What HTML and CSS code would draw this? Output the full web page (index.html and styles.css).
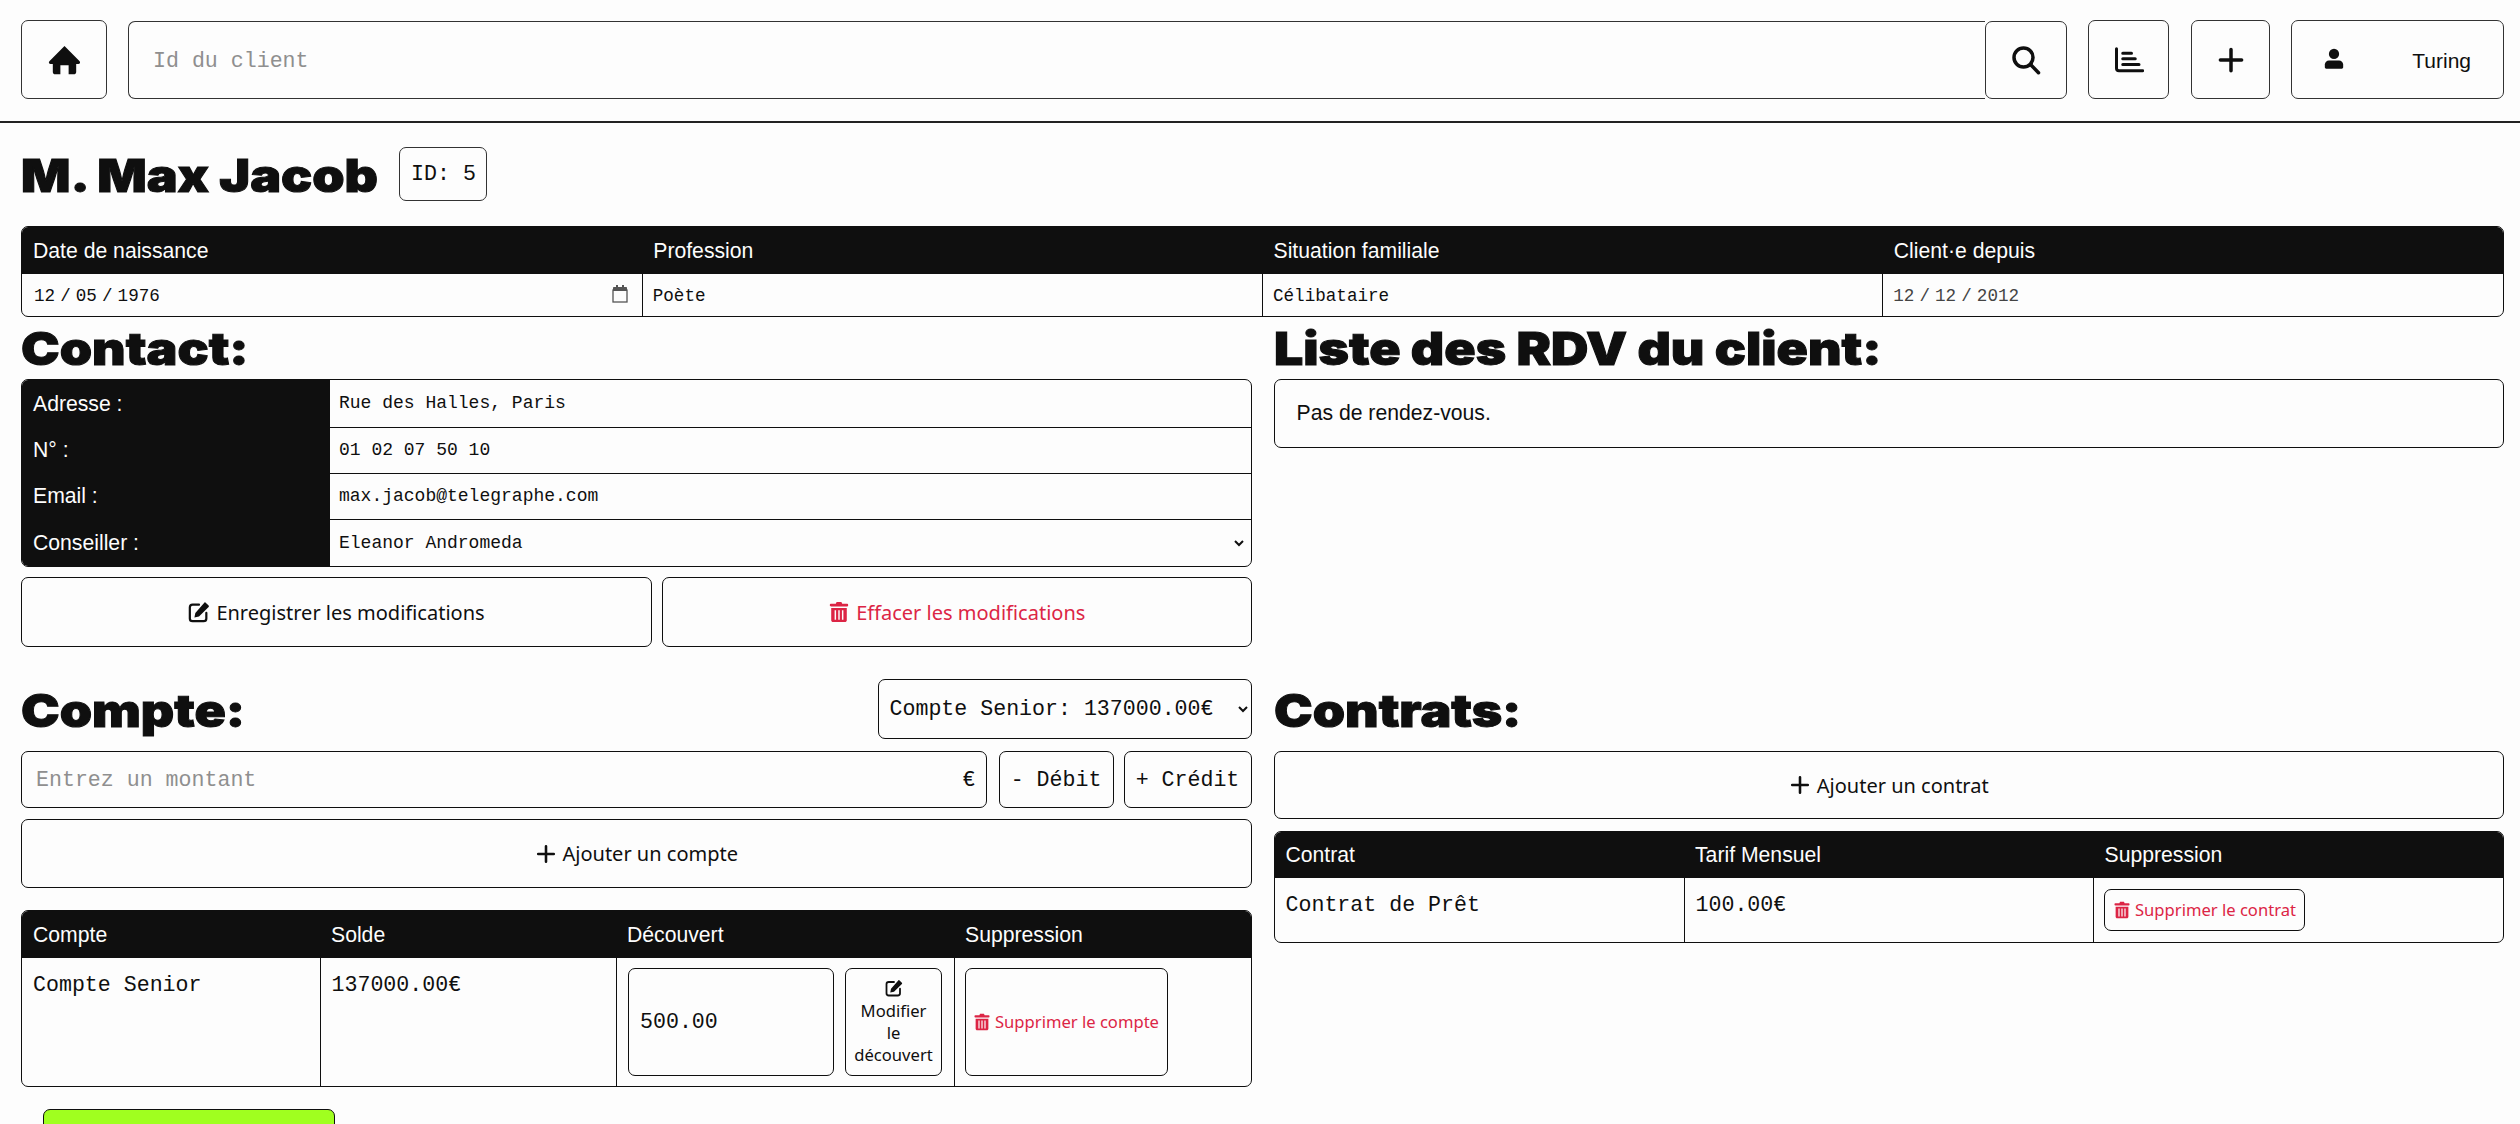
FILE: index.html
```html
<!DOCTYPE html>
<html>
  <head>
    <meta charset="utf-8">
    <title>Fiche client</title>
    <link rel="stylesheet" href="styles.css">
  </head>

<body>
  <svg class="sprite">
    <symbol id="i-home" viewBox="0 0 24 24"><path d="M12 2.200 1 13.200c-.8.900-.2 2 .9 2H3.500V21c0 1 .8 1.800 1.800 1.800H9v-6.600h6v6.600h3.700c1 0 1.800-.8 1.800-1.800v-5.800h1.600c1.100 0 1.700-1.100.9-2z"/></symbol>
    <symbol id="i-search" viewBox="0 0 24 24"><circle cx="10" cy="10" r="7.600" class="line"/><path d="m15.800 15.800 6.200 6.400" class="line"/></symbol>
    <symbol id="i-chart" viewBox="0 0 24 24"><path d="M2 3v15.500c0 1.300.8 2 2 2h19" class="thin"/><path d="M7 6.500h7M7 11h10M7 15.500h13" class="thin"/></symbol>
    <symbol id="i-plus" viewBox="0 0 24 24"><path d="M12 3.500v17M3.500 12h17" class="line"/></symbol>
    <symbol id="i-user" viewBox="0 0 24 24"><circle cx="12" cy="6.500" r="5.600"/><path d="M6.500 13.500h11c2.400 0 4.500 2 4.500 4.500v3c0 1-.7 1.500-1.500 1.500h-17C2.700 22.500 2 22 2 21v-3c0-2.500 2.100-4.500 4.500-4.500z"/></symbol>
    <symbol id="i-edit" viewBox="0 0 24 24"><path d="M12 4H5a3 3 0 0 0-3 3v12a3 3 0 0 0 3 3h12a3 3 0 0 0 3-3v-6" class="thin"/><path d="M19 1.500l3.500 3.500c.5.500.5 1 0 1.500L12 17l-5 1 1-5L18 1.500c.3-.3.700-.3 1 0z"/></symbol>
    <symbol id="i-trash" viewBox="0 0 24 24"><path fill-rule="evenodd" d="M3 3h5.500l.6-1.500c.2-.4.500-.5.900-.5h4c.4 0 .7.100.9.500L15.500 3H21c.6 0 1 .4 1 1v1c0 .5-.4 1-1 1H3c-.6 0-1-.5-1-1V4c0-.6.4-1 1-1zM3.500 7.500h17V21c0 1.200-.9 2-2 2h-13c-1.100 0-2-.8-2-2zM7.200 10v10.500h1.600V10zm4 0v10.500h1.600V10zm4 0v10.500h1.600V10z"/></symbol>
  </svg>

  <nav class="top-bar">
    <button class="nav-button home-button"><svg class="icon icon-home"><use href="#i-home"/></svg></button>
    <div class="search-group">
      <input class="search-input" type="text" placeholder="Id du client">
      <button class="nav-button search-button"><svg class="icon icon-nav"><use href="#i-search"/></svg></button>
    </div>
    <button class="nav-button chart-button"><svg class="icon icon-nav"><use href="#i-chart"/></svg></button>
    <button class="nav-button plus-button"><svg class="icon icon-nav"><use href="#i-plus"/></svg></button>
    <button class="nav-button user-button"><svg class="icon icon-user"><use href="#i-user"/></svg><span>Turing</span></button>
  </nav>

  <main class="page">
    <div class="client-head">
      <h1 class="client-name">M. Max Jacob</h1>
      <span class="client-id">ID: 5</span>
    </div>

    <div class="table-box info-box">
      <table class="data-table info-table">
        <thead>
          <tr><th>Date de naissance</th><th>Profession</th><th>Situation familiale</th><th>Client·e depuis</th></tr>
        </thead>
        <tbody>
          <tr>
            <td><div class="date-field"><span>12 / 05 / 1976</span><svg class="calendar" viewBox="0 0 16 18"><path d="M1 4V3c0-.6.4-1 1-1h2V0h2v2h4V0h2v2h2c.6 0 1 .4 1 1v3H1z" fill="#555"/><rect x="1" y="5" width="14" height="12" fill="none" stroke="#555" stroke-width="1.300"/></svg></div></td>
            <td>Poète</td>
            <td>Célibataire</td>
            <td class="muted date-text">12 / 12 / 2012</td>
          </tr>
        </tbody>
      </table>
    </div>

    <div class="columns">
      <section class="block">
        <h2 class="block-title">Contact:</h2>
        <div class="table-box">
          <table class="contact-table">
            <tr class="first-row"><th>Adresse :</th><td>Rue des Halles, Paris</td></tr>
            <tr><th>N° :</th><td>01 02 07 50 10</td></tr>
            <tr><th>Email :</th><td>max.jacob@telegraphe.com</td></tr>
            <tr>
              <th>Conseiller :</th>
              <td class="select-cell"><select class="plain-select"><option>Eleanor Andromeda</option></select></td>
            </tr>
          </table>
        </div>
        <div class="contact-actions">
          <button class="wide-button"><svg class="icon icon-btn"><use href="#i-edit"/></svg>Enregistrer les modifications</button>
          <button class="wide-button danger"><svg class="icon icon-btn"><use href="#i-trash"/></svg>Effacer les modifications</button>
        </div>
      </section>

      <section class="block">
        <h2 class="block-title">Liste des RDV du client:</h2>
        <div class="rdv-box">Pas de rendez-vous.</div>
      </section>

      <section class="block">
        <div class="section-head">
          <h2 class="block-title">Compte:</h2>
          <select class="account-select"><option>Compte Senior: 137000.00€</option></select>
        </div>
        <div class="amount-row">
          <div class="amount-group">
            <input class="amount-input" type="text" placeholder="Entrez un montant">
            <span>€</span>
          </div>
          <button class="mono-button debit">- Débit</button>
          <button class="mono-button credit">+ Crédit</button>
        </div>
        <button class="wide-button add-account"><svg class="icon icon-btn"><use href="#i-plus"/></svg>Ajouter un compte</button>

        <div class="table-box account-box">
          <table class="data-table big-cells">
            <thead>
              <tr><th class="c-name">Compte</th><th class="c-balance">Solde</th><th class="c-over">Découvert</th><th>Suppression</th></tr>
            </thead>
            <tbody>
              <tr>
                <td>Compte Senior</td>
                <td>137000.00€</td>
                <td class="over-cell">
                  <input class="over-input" type="text" value="500.00">
                  <button class="small-button over-save"><svg class="icon icon-over"><use href="#i-edit"/></svg>Modifier le découvert</button>
                </td>
                <td class="delete-cell"><button class="small-button danger delete-account"><svg class="icon icon-small"><use href="#i-trash"/></svg>Supprimer le compte</button></td>
              </tr>
            </tbody>
          </table>
        </div>
        <button class="green-button"></button>
      </section>

      <section class="block">
        <div class="section-head">
          <h2 class="block-title">Contrats:</h2>
        </div>
        <button class="wide-button add-contract"><svg class="icon icon-btn"><use href="#i-plus"/></svg>Ajouter un contrat</button>

        <div class="table-box contract-box">
          <table class="data-table big-cells">
            <thead>
              <tr><th>Contrat</th><th>Tarif Mensuel</th><th>Suppression</th></tr>
            </thead>
            <tbody>
              <tr>
                <td>Contrat de Prêt</td>
                <td>100.00€</td>
                <td class="delete-contract-cell"><button class="small-button danger delete-contract"><svg class="icon icon-small"><use href="#i-trash"/></svg>Supprimer le contrat</button></td>
              </tr>
            </tbody>
          </table>
        </div>
      </section>
    </div>
  </main>
</body>
</html>
```

FILE: styles.css
```css
* {
  box-sizing: border-box;
}

html, body {
  height: 1124px;
  overflow: hidden;
}

body {
  margin: 0;
  background-color: #fdfdfd;
  color: #0f0f0f;
  font-family: "Liberation Sans", Arial, sans-serif;
  font-size: 21.2px;
}

.sprite {
  display: none;
}

.icon {
  fill: currentColor;
  flex: none;
}

.line {
  fill: none;
  stroke: currentColor;
  stroke-width: 2.8;
  stroke-linecap: round;
}

.thin {
  fill: none;
  stroke: currentColor;
  stroke-width: 2.4;
  stroke-linecap: round;
}

button {
  background-color: transparent;
  color: #0f0f0f;
  border: 1px solid #333;
  border-radius: 7px;
  cursor: pointer;
  padding: 0;
}

input, select {
  color: #0f0f0f;
  background-color: transparent;
  font-family: "Liberation Mono", monospace;
  outline: none;
}

input::placeholder {
  color: #8f8f8f;
}

/* top bar */

.top-bar {
  display: flex;
  align-items: stretch;
  height: 123px;
  padding: 20px 16px 22px 21px;
  border-bottom: 2px solid #222;
}

.nav-button {
  display: flex;
  align-items: center;
  justify-content: center;
}

.icon-nav {
  width: 30px;
  height: 30px;
}

.icon-home {
  width: 33px;
  height: 33px;
}

.home-button {
  width: 86px;
}

.search-group {
  flex: 1;
  display: flex;
  margin: 1px 21px 0 21px;
}

.search-input {
  flex: 1;
  min-width: 0;
  border: 1px solid #333;
  border-right: none;
  border-radius: 7px 0 0 7px;
  padding: 2px 24px 0 24px;
  font-size: 21.6px;
}

.search-button {
  width: 82px;
}

.chart-button {
  width: 81px;
}

.plus-button {
  width: 79px;
  margin-left: 22px;
}

.user-button {
  width: 213px;
  margin-left: 21px;
  justify-content: space-between;
  padding: 0 32px 0 31px;
  font-family: "Liberation Sans", Arial, sans-serif;
  font-size: 21px;
}

.user-button span {
  padding-top: 2px;
}

.icon-user {
  width: 22px;
  height: 24px;
  margin-bottom: 2px;
}

/* page */

.page {
  padding: 24px 16px 0 21px;
}

.client-head {
  display: flex;
  align-items: center;
  height: 54px;
}

.client-name, .block-title {
  width: fit-content;
  margin: 0;
  font-family: "Inter", sans-serif;
  font-weight: 900;
  font-size: 45px;
  -webkit-text-stroke: 1px #0f0f0f;
  transform: scaleX(1.15);
  transform-origin: left center;
  white-space: nowrap;
}

.client-name {
  padding-top: 2px;
}

.client-id {
  display: flex;
  align-items: center;
  justify-content: center;
  width: 88px;
  height: 54px;
  margin-left: 68px;
  border: 1px solid #333;
  border-radius: 7px;
  font-family: "Liberation Mono", monospace;
  font-size: 21.6px;
}

.table-box {
  border: 1px solid #0f0f0f;
  border-radius: 7px;
  overflow: hidden;
}

.info-box {
  margin-top: 25px;
}

.data-table, .contact-table {
  width: 100%;
  border-collapse: collapse;
  table-layout: fixed;
}

.data-table th {
  height: 47px;
  padding: 0 11px;
  background-color: #0f0f0f;
  color: #fdfdfd;
  font-weight: normal;
  text-align: left;
}

.data-table td {
  height: 42px;
  padding: 0 10px;
  font-family: "Liberation Mono", monospace;
  font-size: 17.6px;
  border-left: 1px solid #0f0f0f;
}

.data-table td:first-child {
  border-left: none;
}

.info-table td {
  padding-top: 2px;
}

.muted {
  color: #444;
}

.date-text, .date-field span {
  word-spacing: -5.5px;
}

.date-field {
  display: flex;
  align-items: center;
  justify-content: space-between;
  padding: 0 4px 0 2px;
}

.calendar {
  width: 16px;
  height: 18px;
  margin-bottom: 4px;
}

/* two columns */

.columns {
  display: grid;
  grid-template-columns: 1fr 1fr;
  column-gap: 22px;
}

.block-title {
  line-height: 64px;
  height: 62px;
}

.contact-table th {
  width: 308px;
  padding: 0 11px;
  background-color: #0f0f0f;
  color: #fdfdfd;
  font-weight: normal;
  text-align: left;
}

.contact-table td {
  height: 46px;
  padding: 0 9px;
  font-family: "Liberation Mono", monospace;
  font-size: 18px;
  border-bottom: 1px solid #0f0f0f;
}

.contact-table .first-row td {
  height: 47px;
}

.contact-table tr:last-child td {
  border-bottom: none;
  height: 47px;
}

.contact-table td.select-cell {
  padding: 0 4px 0 5px;
}

.plain-select {
  width: 100%;
  border: none;
  font-size: 18px;
}

.contact-actions {
  display: grid;
  grid-template-columns: 631px 1fr;
  gap: 10px;
  margin: 10px 0 32px 0;
}

.wide-button {
  display: flex;
  align-items: center;
  justify-content: center;
  gap: 6px;
  width: 100%;
  height: 70px;
  border-color: #0f0f0f;
  font-family: "Noto Sans", sans-serif;
  font-size: 20px;
}

.icon-btn {
  width: 22px;
  height: 22px;
}

.danger {
  color: #dc2545;
}

.rdv-box {
  height: 69px;
  padding: 21px 22px;
  border: 1px solid #0f0f0f;
  border-radius: 7px;
}

.section-head {
  display: flex;
  align-items: center;
  justify-content: space-between;
  height: 60px;
  margin-bottom: 12px;
}

.section-head .block-title {
  padding-top: 1px;
}

.account-select {
  width: 374px;
  height: 60px;
  padding: 0 4px 0 7px;
  border: 1px solid #0f0f0f;
  border-radius: 7px;
  font-size: 21.6px;
}

.amount-row {
  display: flex;
  height: 57px;
}

.amount-group {
  flex: 1;
  display: flex;
  align-items: center;
  padding: 0 10px 0 14px;
  border: 1px solid #0f0f0f;
  border-radius: 7px;
  font-family: "Liberation Mono", monospace;
  font-size: 21.6px;
}

.amount-input {
  flex: 1;
  border: none;
  padding: 0;
  font-size: 21.6px;
}

.mono-button {
  border-color: #0f0f0f;
  font-family: "Liberation Mono", monospace;
  font-size: 21.6px;
}

.debit {
  width: 115px;
  margin-left: 12px;
}

.credit {
  width: 128px;
  margin-left: 10px;
}

.add-account {
  height: 69px;
  margin-top: 11px;
}

.account-box {
  margin-top: 22px;
}

.big-cells td {
  vertical-align: top;
  padding: 15px 11px;
  font-size: 21.6px;
}

.c-name {
  width: 298px;
}

.c-balance {
  width: 296px;
}

.c-over {
  width: 338px;
}

.big-cells td.over-cell {
  display: flex;
  gap: 11px;
  height: 128px;
  padding: 10px 11px;
}

.over-input {
  width: 206px;
  height: 108px;
  padding: 0 11px;
  border: 1px solid #0f0f0f;
  border-radius: 7px;
  font-size: 21.6px;
}

.small-button {
  font-family: "Noto Sans", sans-serif;
  font-size: 16.6px;
  line-height: 22px;
  border-color: #0f0f0f;
}

.over-save {
  width: 97px;
  height: 108px;
  padding: 0 8px;
}

.icon-over {
  display: block;
  width: 18px;
  height: 18px;
  margin: 0 auto 3px auto;
}

.big-cells td.delete-cell {
  padding: 10px 10px;
}

.delete-account {
  display: flex;
  align-items: center;
  justify-content: center;
  gap: 4px;
  width: 203px;
  height: 108px;
}

.icon-small {
  width: 18px;
  height: 20px;
}

.green-button {
  display: block;
  width: 292px;
  height: 60px;
  margin: 22px 0 0 22px;
  background-color: #a0ff1f;
  border-color: #0f0f0f;
}

.add-contract {
  height: 68px;
}

.contract-box {
  margin-top: 12px;
}

.contract-box th {
  height: 46px;
}

.big-cells td.delete-contract-cell {
  padding: 11px 10px;
}

.delete-contract {
  display: flex;
  align-items: center;
  justify-content: center;
  gap: 4px;
  width: 201px;
  height: 42px;
}
```
